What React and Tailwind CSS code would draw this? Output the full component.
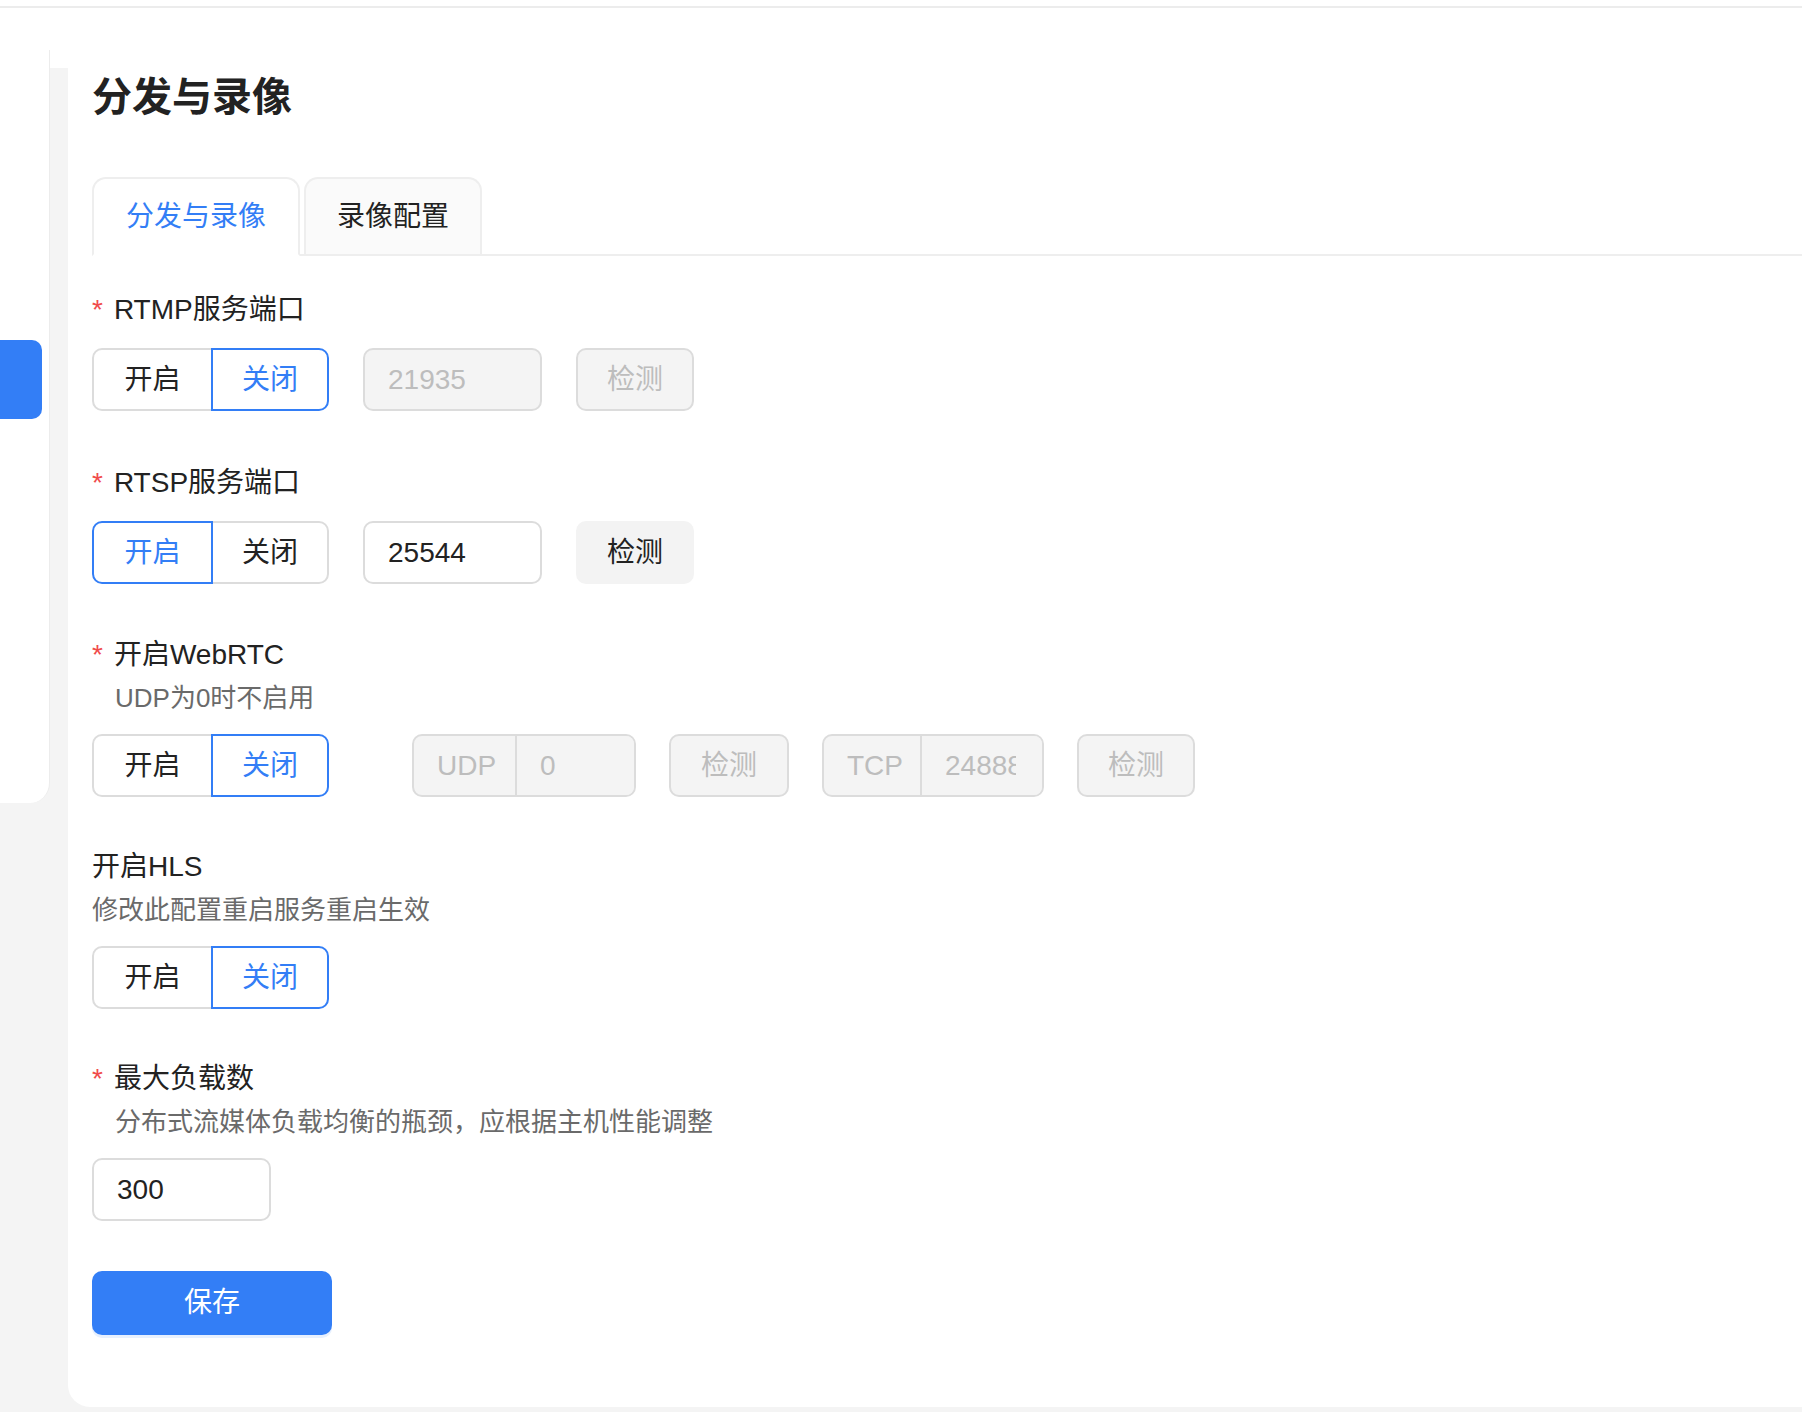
import { useState } from 'react';

function FieldLabel({ required, children }) {
  return (
    <div className="flex h-[38px] items-center text-[28px] leading-[38px] text-[#222]">
      {required && <span className="mr-[11px] text-[#f04b4b]">*</span>}
      {children}
    </div>
  );
}

function Hint({ indent, children }) {
  return (
    <div className={`mt-[6px] text-[26px] leading-[36px] text-[#6a6a6a] ${indent ? 'pl-[23px]' : ''}`}>
      {children}
    </div>
  );
}

function OnOff({ on, onChange }) {
  return (
    <div className="flex h-[63px]">
      <button
        onClick={() => onChange(true)}
        className={`relative h-full w-[121px] rounded-l-[10px] border-2 text-[28px] ${
          on ? 'z-10 border-[#337ef6] text-[#337ef6]' : 'border-[#dcdcdc] text-[#222]'
        }`}
      >
        开启
      </button>
      <button
        onClick={() => onChange(false)}
        className={`relative -ml-[2px] h-full w-[118px] rounded-r-[10px] border-2 text-[28px] ${
          !on ? 'z-10 border-[#337ef6] text-[#337ef6]' : 'border-[#dcdcdc] text-[#222]'
        }`}
      >
        关闭
      </button>
    </div>
  );
}

function PortInput({ value, disabled }) {
  return (
    <input
      defaultValue={value}
      disabled={disabled}
      className={`h-[63px] w-[179px] rounded-[10px] border-2 border-[#dcdcdc] pl-[23px] pr-[19px] text-[28px] outline-none ${
        disabled ? 'bg-[#f4f4f4] text-[#bdbdbd]' : 'bg-white text-[#222]'
      }`}
    />
  );
}

function CheckBtn({ disabled, wide }) {
  return (
    <button
      disabled={disabled}
      className={`h-[63px] ${wide ? 'w-[120px]' : 'w-[118px]'} rounded-[10px] border-2 text-[28px] ${
        disabled
          ? 'border-[#dcdcdc] bg-[#f4f4f4] text-[#bdbdbd]'
          : 'border-[#f3f3f3] bg-[#f3f3f3] text-[#222]'
      }`}
    >
      检测
    </button>
  );
}

function AddonInput({ addon, value, addonW, inputW }) {
  return (
    <div className="flex h-[63px] overflow-hidden rounded-[10px] border-2 border-[#dcdcdc] bg-[#f4f4f4]">
      <div className={`flex ${addonW} items-center border-r-2 border-[#dcdcdc] pl-[23px] text-[28px] text-[#bdbdbd]`}>
        {addon}
      </div>
      <input
        defaultValue={value}
        disabled
        className={`${inputW} bg-[#f4f4f4] pl-[23px] pr-[26px] text-[28px] text-[#bdbdbd] outline-none`}
      />
    </div>
  );
}

export default function App() {
  const [rtmp, setRtmp] = useState(false);
  const [rtsp, setRtsp] = useState(true);
  const [webrtc, setWebrtc] = useState(false);
  const [hls, setHls] = useState(false);

  return (
    <div className="min-h-screen bg-[#f4f4f4] font-[family-name:'Liberation_Sans','Noto_Sans_CJK_SC',sans-serif]">
      <div className="h-[6px] bg-white" />
      <div className="h-[2px] bg-[#ececec]" />
      <div className="h-[42px] bg-white" />

      <div className="flex">
        <aside className="h-[753px] w-[50px] shrink-0 rounded-br-[20px] border-r border-[#ececec] bg-white pt-[290px]">
          <div className="h-[79px] w-[42px] rounded-r-[10px] bg-[#337ef6]" />
        </aside>

        {/* gutter between nav and card, white where it meets the header */}
        <div className="w-[18px] shrink-0 border-t-[18px] border-white" />

        <main className="flex-1 rounded-bl-[22px] bg-white pb-[72px] pl-[24px] pt-[19px]">
          <h1 className="h-[56px] text-[40px] font-bold leading-[56px] text-[#222]">分发与录像</h1>

          <div className="mt-[52px] flex items-end border-b-2 border-[#eeeeee]">
            <div className="-mb-[2px] flex h-[79px] items-center rounded-t-[14px] border-2 border-[#eeeeee] border-b-white bg-white px-[32px] text-[28px] text-[#337ef6]">
              分发与录像
            </div>
            <div className="ml-[4px] flex h-[77px] items-center rounded-t-[14px] border-2 border-b-0 border-[#eeeeee] bg-[#fafafa] px-[31px] text-[28px] text-[#222]">
              录像配置
            </div>
          </div>

          <section className="mt-[35px]">
            <FieldLabel required>RTMP服务端口</FieldLabel>
            <div className="mt-[19px] flex items-center gap-[34px]">
              <OnOff on={rtmp} onChange={setRtmp} />
              <PortInput value="21935" disabled />
              <CheckBtn disabled />
            </div>
          </section>

          <section className="mt-[53px]">
            <FieldLabel required>RTSP服务端口</FieldLabel>
            <div className="mt-[19px] flex items-center gap-[34px]">
              <OnOff on={rtsp} onChange={setRtsp} />
              <PortInput value="25544" />
              <CheckBtn />
            </div>
          </section>

          <section className="mt-[52px]">
            <FieldLabel required>开启WebRTC</FieldLabel>
            <Hint indent>UDP为0时不启用</Hint>
            <div className="mt-[18px] flex items-center gap-[33px]">
              <div className="mr-[50px]">
                <OnOff on={webrtc} onChange={setWebrtc} />
              </div>
              <AddonInput addon="UDP" value="0" addonW="w-[103px]" inputW="w-[117px]" />
              <CheckBtn disabled wide />
              <AddonInput addon="TCP" value="24888" addonW="w-[98px]" inputW="w-[120px]" />
              <CheckBtn disabled />
            </div>
          </section>

          <section className="mt-[51px]">
            <FieldLabel>开启HLS</FieldLabel>
            <Hint>修改此配置重启服务重启生效</Hint>
            <div className="mt-[18px]">
              <OnOff on={hls} onChange={setHls} />
            </div>
          </section>

          <section className="mt-[51px]">
            <FieldLabel required>最大负载数</FieldLabel>
            <Hint indent>分布式流媒体负载均衡的瓶颈，应根据主机性能调整</Hint>
            <div className="mt-[18px]">
              <PortInput value="300" />
            </div>
          </section>

          <button className="mt-[50px] h-[64px] w-[240px] rounded-[10px] bg-[#337ef6] text-[28px] text-white shadow-[0_3px_0_#e7f0fe]">
            保存
          </button>
        </main>
      </div>
    </div>
  );
}
